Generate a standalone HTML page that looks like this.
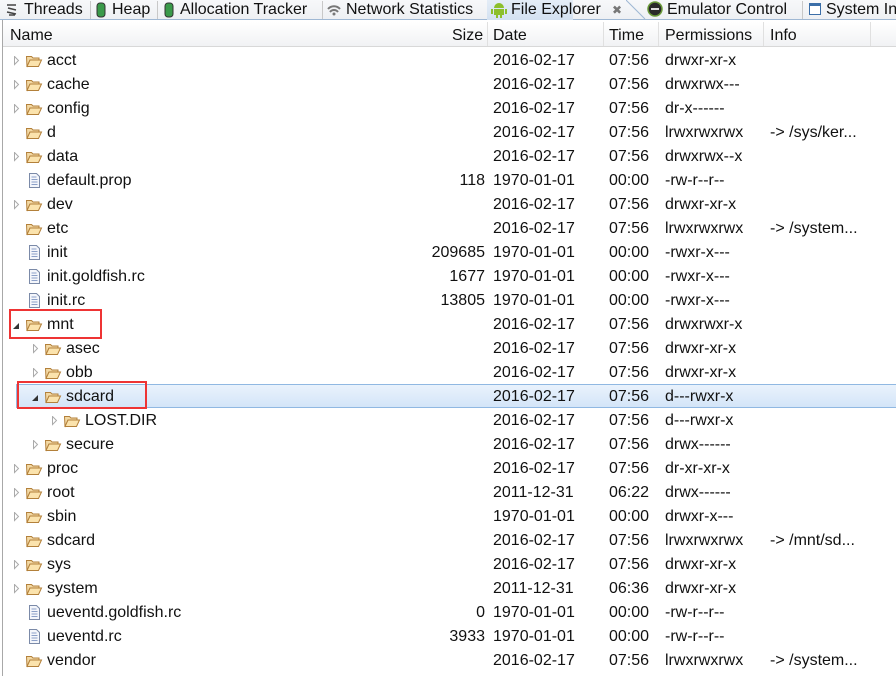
<!DOCTYPE html>
<html><head><meta charset="utf-8"><style>
body{margin:0;width:896px;height:676px;overflow:hidden;background:#fff;font-family:"Liberation Sans","Microsoft YaHei",sans-serif;font-size:16px;color:#111;position:relative}
.tabs{position:absolute;left:0;top:0;width:896px;height:19px;background:linear-gradient(#f7f8fa,#eef0f3);border-bottom:1px solid #9fb8d4}
.tab{position:absolute;top:1px;height:19px;line-height:18px;white-space:nowrap}
.sep{position:absolute;top:1px;width:1px;height:18px;background:#c8c8c8}
.act{position:absolute;left:487px;top:0;width:86px;height:20px;background:linear-gradient(#e4edf7,#d3e1f1);}
.panel{position:absolute;left:2px;top:20px;width:894px;height:656px;border-left:1px solid #a8a8a8}
.hdr{position:absolute;left:3px;top:22px;width:893px;height:24px;background:linear-gradient(#fff,#f1f2f4);border-bottom:1px solid #d8d8d8}
.hdr span{position:absolute;top:1px;line-height:25px}
.hs{position:absolute;top:22px;width:1px;height:24px;background:#e0e0e0}
.r{position:absolute;left:3px;width:893px;height:24px;line-height:24px}
.r span{position:absolute;top:1px;white-space:nowrap}
.sz{right:411px;text-align:right}
.dt{left:490px}.tm{left:606px}.pm{left:662px}.inf{left:767px}
.sel{background:linear-gradient(#e9f2fc,#d4e5f8);border:1px solid #90b8e2;border-right:none;box-sizing:border-box;left:16px;width:880px}
.box{position:absolute;border:2px solid #ee3434;box-sizing:border-box}
svg{position:absolute}
</style></head><body>
<div class="tabs"></div>
<div class="act"></div>
<svg style="left:4px;top:2px" width="16" height="16"><path d="M3 3h9M4 6l8 2M3 10l9 2M5 13h6" stroke="#444" stroke-width="1.5" fill="none"/></svg>
<div class="tab" style="left:24px">Threads</div><div class="sep" style="left:90px"></div>
<svg style="left:95px;top:2px" width="12" height="16"><rect x="2" y="1" width="8" height="14" rx="3" fill="#3a9a4a" stroke="#333"/></svg>
<div class="tab" style="left:112px">Heap</div><div class="sep" style="left:157px"></div>
<svg style="left:163px;top:2px" width="12" height="16"><rect x="2" y="1" width="8" height="14" rx="3" fill="#3a9a4a" stroke="#333"/></svg>
<div class="tab" style="left:180px">Allocation Tracker</div><div class="sep" style="left:322px"></div>
<svg style="left:326px;top:3px" width="16" height="14"><path d="M2 6a8 8 0 0 1 12 0M4 9a5 5 0 0 1 8 0" stroke="#777" stroke-width="2" fill="none"/><circle cx="8" cy="11" r="1.5" fill="#777"/></svg>
<div class="tab" style="left:346px">Network Statistics</div>
<svg style="left:491px;top:1px" width="16" height="17"><path d="M3 7a5 5 0 0 1 10 0z" fill="#8cbf2c"/><rect x="3" y="8" width="10" height="6" fill="#8cbf2c"/><rect x="0" y="8" width="2" height="5" fill="#8cbf2c"/><rect x="14" y="8" width="2" height="5" fill="#8cbf2c"/><rect x="5" y="14" width="2" height="3" fill="#8cbf2c"/><rect x="9" y="14" width="2" height="3" fill="#8cbf2c"/></svg>
<div class="tab" style="left:511px">File Explorer</div>
<div class="tab" style="left:612px;font-size:12px;color:#777">✖</div>
<svg style="left:626px;top:0" width="20" height="20"><path d="M0 0 L19 19" stroke="#9fb8d4" fill="none"/></svg>
<svg style="left:647px;top:1px" width="16" height="16"><circle cx="8" cy="8" r="7" fill="#2a2a2a" stroke="#6a9a3a" stroke-width="1.5"/><rect x="4" y="7" width="8" height="2" fill="#ddd"/></svg>
<div class="tab" style="left:667px">Emulator Control</div><div class="sep" style="left:802px"></div>
<svg style="left:808px;top:2px" width="14" height="14"><rect x="1.5" y="1.5" width="11" height="11" fill="#fff" stroke="#3b6ea8"/><rect x="2" y="2" width="10" height="2" fill="#3b6ea8"/></svg>
<div class="tab" style="left:826px;width:70px;overflow:hidden">System Information</div>

<div class="panel"></div>
<div class="hdr"><span style="left:7px">Name</span><span style="left:449px">Size</span><span style="left:490px">Date</span><span style="left:606px">Time</span><span style="left:662px">Permissions</span><span style="left:767px">Info</span></div>
<div class="hs" style="left:487px"></div><div class="hs" style="left:603px"></div><div class="hs" style="left:658px"></div><div class="hs" style="left:763px"></div><div class="hs" style="left:870px"></div>

<div class="r sel" style="top:384px"></div>

<div id="rows"></div>
<script>
var F='<path d="M0.5 2.5h5l1.5 1.5h6v2H4l-3 7z" fill="#f3d9a4" stroke="#b3803a"/><path d="M1 12.5l3-6.5h11.5l-3 6.5z" fill="#fbe3ad" stroke="#b3803a"/>';
var D='<path d="M1.5 0.5h7l3 3v11h-10z" fill="#f4f6fb" stroke="#7b8aa8"/><path d="M3.5 4h5M3.5 6.5h6M3.5 9h6M3.5 11.5h6" stroke="#8ca0c8"/>';
var C='<path d="M1.5 0.5l4 4-4 4z" fill="none" stroke="#aaa"/>';
var E='<path d="M6 1v6H0z" fill="#333"/>';
var rows=[
[0,'c','f','acct','','2016-02-17','07:56','drwxr-xr-x',''],
[0,'c','f','cache','','2016-02-17','07:56','drwxrwx---',''],
[0,'c','f','config','','2016-02-17','07:56','dr-x------',''],
[0,'','f','d','','2016-02-17','07:56','lrwxrwxrwx','-> /sys/ker...'],
[0,'c','f','data','','2016-02-17','07:56','drwxrwx--x',''],
[0,'','d','default.prop','118','1970-01-01','00:00','-rw-r--r--',''],
[0,'c','f','dev','','2016-02-17','07:56','drwxr-xr-x',''],
[0,'','f','etc','','2016-02-17','07:56','lrwxrwxrwx','-> /system...'],
[0,'','d','init','209685','1970-01-01','00:00','-rwxr-x---',''],
[0,'','d','init.goldfish.rc','1677','1970-01-01','00:00','-rwxr-x---',''],
[0,'','d','init.rc','13805','1970-01-01','00:00','-rwxr-x---',''],
[0,'e','f','mnt','','2016-02-17','07:56','drwxrwxr-x',''],
[1,'c','f','asec','','2016-02-17','07:56','drwxr-xr-x',''],
[1,'c','f','obb','','2016-02-17','07:56','drwxr-xr-x',''],
[1,'e','f','sdcard','','2016-02-17','07:56','d---rwxr-x',''],
[2,'c','f','LOST.DIR','','2016-02-17','07:56','d---rwxr-x',''],
[1,'c','f','secure','','2016-02-17','07:56','drwx------',''],
[0,'c','f','proc','','2016-02-17','07:56','dr-xr-xr-x',''],
[0,'c','f','root','','2011-12-31','06:22','drwx------',''],
[0,'c','f','sbin','','1970-01-01','00:00','drwxr-x---',''],
[0,'','f','sdcard','','2016-02-17','07:56','lrwxrwxrwx','-> /mnt/sd...'],
[0,'c','f','sys','','2016-02-17','07:56','drwxr-xr-x',''],
[0,'c','f','system','','2011-12-31','06:36','drwxr-xr-x',''],
[0,'','d','ueventd.goldfish.rc','0','1970-01-01','00:00','-rw-r--r--',''],
[0,'','d','ueventd.rc','3933','1970-01-01','00:00','-rw-r--r--',''],
[0,'','f','vendor','','2016-02-17','07:56','lrwxrwxrwx','-> /system...']];
var h='';
rows.forEach(function(r,i){
 var t=48+24*i,b=10+19*r[0];
 h+='<div class="r" style="top:'+t+'px">';
 if(r[1]=='c')h+='<svg style="left:'+b+'px;top:8px" width="8" height="10">'+C+'</svg>';
 if(r[1]=='e')h+='<svg style="left:'+b+'px;top:10px" width="8" height="10">'+E+'</svg>';
 if(r[2]=='f')h+='<svg style="left:'+(b+13)+'px;top:6px" width="17" height="14">'+F+'</svg>';
 else h+='<svg style="left:'+(b+15)+'px;top:5px" width="13" height="16">'+D+'</svg>';
 h+='<span style="left:'+(b+34)+'px">'+r[3]+'</span><span class="sz">'+r[4]+'</span><span class="dt">'+r[5]+'</span><span class="tm">'+r[6]+'</span><span class="pm">'+r[7]+'</span><span class="inf">'+r[8]+'</span></div>';
});
document.getElementById('rows').innerHTML=h;
</script>
<div class="box" style="left:9px;top:309px;width:93px;height:30px"></div>
<div class="box" style="left:17px;top:381px;width:130px;height:28px"></div>
</body></html>
